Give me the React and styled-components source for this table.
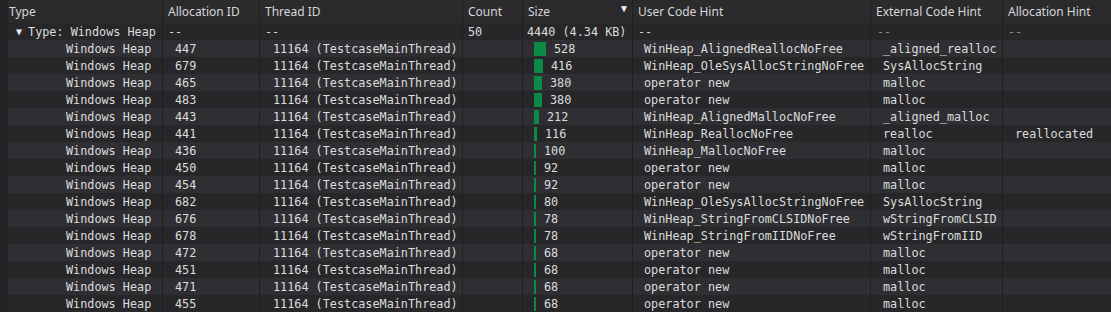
import React from 'react';
import styled, { createGlobalStyle } from 'styled-components';

const GlobalStyle = createGlobalStyle`
    html, body {
        margin: 0;
        padding: 0;
        background: #232325;
    }
    * {
        box-sizing: border-box;
    }
`;

const COLUMNS = '154px 97px 203px 60px 110px 238px 132px 1fr';

const Page = styled.div`
    width: 1111px;
    height: 312px;
    overflow: hidden;
    padding-left: 8px;
    background: #232325;
`;

const Grid = styled.div`
    display: grid;
    grid-template-columns: ${COLUMNS};
`;

const HeaderCell = styled.div`
    height: 23px;
    display: flex;
    align-items: center;
    justify-content: space-between;
    padding-left: ${props => props.$first ? '1px' : '5px'};
    padding-right: 3px;
    background: #2b2b2e;
    border-left: ${props => props.$first ? 'none' : '1px solid #1f1f22'};
    color: #d6d6d6;
    font-family: "Noto Sans", "Open Sans", sans-serif;
    font-size: 12px;
    white-space: nowrap;
    overflow: hidden;
`;

const SortArrow = styled.span`
    align-self: flex-start;
    margin-top: 3px;
    font-size: 10px;
    line-height: 1;
    color: #f4f4f4;
`;

const Cell = styled.div`
    height: 17px;
    display: flex;
    align-items: center;
    padding-left: ${props => props.$indent}px;
    background: ${props => props.$light ? '#2f2f33' : '#27272a'};
    border-left: ${props => props.$first ? 'none' : '1px solid #1f1f22'};
    color: ${props => props.$dim ? '#8c8c8c' : '#dcdcdc'};
    font-family: "DejaVu Sans Mono", "Liberation Mono", monospace;
    font-size: 11.8px;
    white-space: nowrap;
    overflow: hidden;
`;

const Caret = styled.span`
    font-size: 10px;
    margin-right: 6px;
    color: #ececec;
`;

const Bar = styled.span`
    display: inline-block;
    height: 14px;
    margin-right: 8px;
    background: #0b8a47;
    flex-shrink: 0;
`;

const headers = [
    'Type', 'Allocation ID', 'Thread ID', 'Count', 'Size',
    'User Code Hint', 'External Code Hint', 'Allocation Hint'
];

const rows = [
    [447, 528, 'WinHeap_AlignedReallocNoFree', '_aligned_realloc', ''],
    [679, 416, 'WinHeap_OleSysAllocStringNoFree', 'SysAllocString', ''],
    [465, 380, 'operator new', 'malloc', ''],
    [483, 380, 'operator new', 'malloc', ''],
    [443, 212, 'WinHeap_AlignedMallocNoFree', '_aligned_malloc', ''],
    [441, 116, 'WinHeap_ReallocNoFree', 'realloc', 'reallocated'],
    [436, 100, 'WinHeap_MallocNoFree', 'malloc', ''],
    [450, 92, 'operator new', 'malloc', ''],
    [454, 92, 'operator new', 'malloc', ''],
    [682, 80, 'WinHeap_OleSysAllocStringNoFree', 'SysAllocString', ''],
    [676, 78, 'WinHeap_StringFromCLSIDNoFree', 'wStringFromCLSID', ''],
    [678, 78, 'WinHeap_StringFromIIDNoFree', 'wStringFromIID', ''],
    [472, 68, 'operator new', 'malloc', ''],
    [451, 68, 'operator new', 'malloc', ''],
    [471, 68, 'operator new', 'malloc', ''],
    [455, 68, 'operator new', 'malloc', ''],
];

function barWidth(size) {
    return Math.max(2, Math.round(size / 45));
}

function GroupRow() {
    return (
        <>
            <Cell $first $indent={8}><Caret>▼</Caret>Type: Windows Heap</Cell>
            <Cell $indent={5}>--</Cell>
            <Cell $indent={5}>--</Cell>
            <Cell $indent={5}>50</Cell>
            <Cell $indent={4}>4440 (4.34 KB)</Cell>
            <Cell $indent={5}>--</Cell>
            <Cell $indent={6} $dim>--</Cell>
            <Cell $indent={5} $dim>--</Cell>
        </>
    );
}

function HeapRow({ row, light }) {
    const [id, size, userHint, extHint, allocHint] = row;
    return (
        <>
            <Cell $first $light={light} $indent={58}>Windows Heap</Cell>
            <Cell $light={light} $indent={12}>{id}</Cell>
            <Cell $light={light} $indent={13}>11164 (TestcaseMainThread)</Cell>
            <Cell $light={light} $indent={5}></Cell>
            <Cell $light={light} $indent={11}>
                <Bar style={{ width: barWidth(size) }} />
                {size}
            </Cell>
            <Cell $light={light} $indent={11}>{userHint}</Cell>
            <Cell $light={light} $indent={12}>{extHint}</Cell>
            <Cell $light={light} $indent={12}>{allocHint}</Cell>
        </>
    );
}

function App() {
    return (
        <Page>
            <GlobalStyle />
            <Grid>
                {headers.map((h, i) => (
                    <HeaderCell key={h} $first={i === 0}>
                        <span>{h}</span>
                        {h === 'Size' && <SortArrow>▼</SortArrow>}
                    </HeaderCell>
                ))}
                <GroupRow />
                {rows.map((row, i) => (
                    <HeapRow key={row[0]} row={row} light={i % 2 === 0} />
                ))}
            </Grid>
        </Page>
    );
}

export default App;
